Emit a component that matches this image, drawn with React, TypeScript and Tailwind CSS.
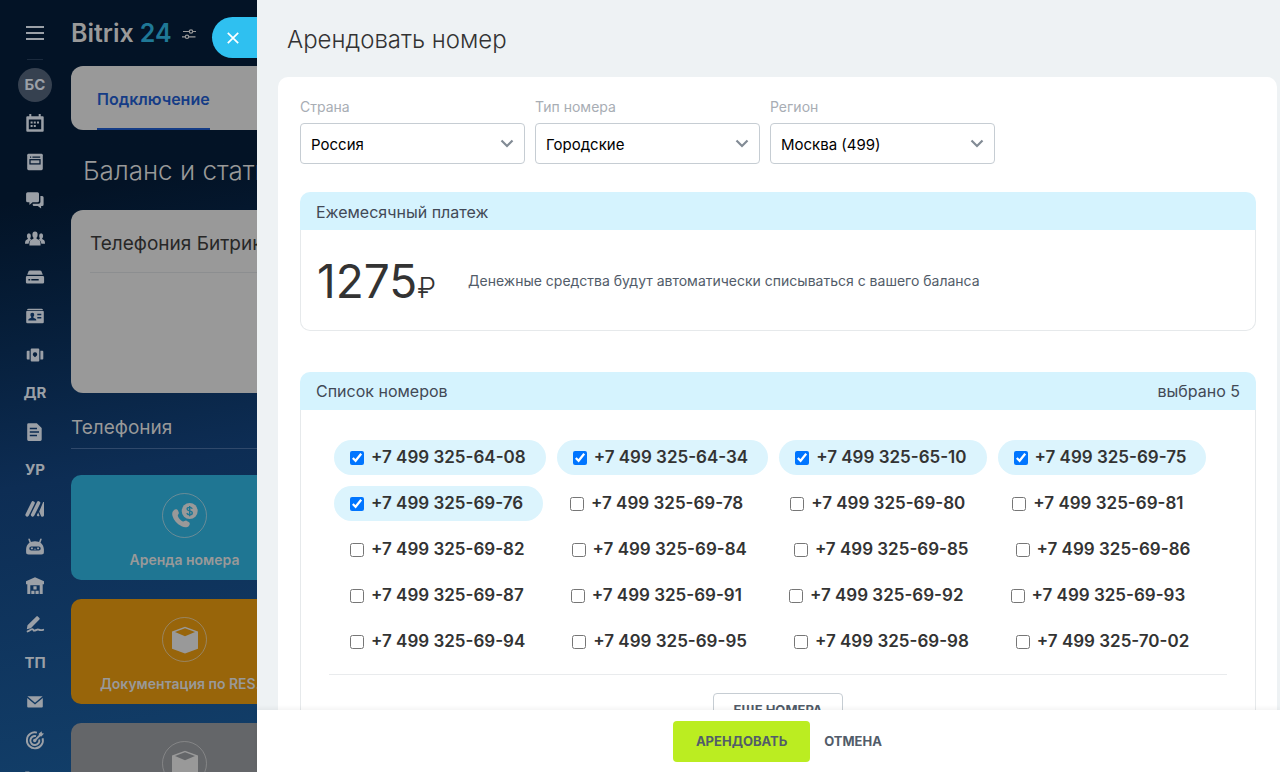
import React, { useState } from "react";

const PHONES = [
  "+7 499 325-64-08", "+7 499 325-64-34", "+7 499 325-65-10", "+7 499 325-69-75",
  "+7 499 325-69-76", "+7 499 325-69-78", "+7 499 325-69-80", "+7 499 325-69-81",
  "+7 499 325-69-82", "+7 499 325-69-84", "+7 499 325-69-85", "+7 499 325-69-86",
  "+7 499 325-69-87", "+7 499 325-69-91", "+7 499 325-69-92", "+7 499 325-69-93",
  "+7 499 325-69-94", "+7 499 325-69-95", "+7 499 325-69-98", "+7 499 325-70-02",
];

const Icon = ({ children }: { children: React.ReactNode }) => (
  <svg viewBox="0 0 20 20" className="size-5" fill="currentColor" aria-hidden="true">
    {children}
  </svg>
);

const dark = "#061a33";
const mid = "#0c2a50";

const MENU: { label: string; icon?: React.ReactNode }[] = [
  {
    label: "Календарь",
    icon: (
      <Icon>
        <path fillRule="evenodd" d="M2.3 3.2h2V1h2v2.2h7.4V1h2v2.2h2a1 1 0 0 1 1 1v13.500a1 1 0 0 1-1 1H2.300a1 1 0 0 1-1-1V4.200a1 1 0 0 1 1-1zM3.800 6.600v9.600h12.400V6.600z" />
        <path d="M8.800 8.500h2v2h-2zM12 8.500h2v2h-2zM5.600 11.900h2v2h-2zM8.800 11.900h2v2h-2zM5.600 8.500h2v2h-2z" />
      </Icon>
    ),
  },
  {
    label: "Лента",
    icon: (
      <Icon>
        <rect x="2.200" y="1.800" width="15.600" height="16.400" rx="1.400" />
        <path d="M5 5.200h1.200M7.400 5.200h7.800" stroke={dark} strokeWidth="1.300" />
        <rect x="5" y="7.700" width="10" height="4.200" fill="none" stroke={dark} strokeWidth="1.300" />
      </Icon>
    ),
  },
  {
    label: "Чат",
    icon: (
      <Icon>
        <path d="M2.700 2.200h9.600A1.600 1.600 0 0 1 14 3.800v6.900a1.600 1.600 0 0 1-1.700 1.600H7.600L4.400 15v-2.700H2.700a1.600 1.600 0 0 1-1.600-1.600V3.800a1.600 1.600 0 0 1 1.600-1.600z" />
        <path d="M15.400 6h1.700a1.500 1.500 0 0 1 1.500 1.500v6.900a1.500 1.500 0 0 1-1.500 1.500h-1v2.500L12.800 16H9a1.300 1.300 0 0 1-1.300-1.300v-.9H13.600a1.800 1.800 0 0 0 1.800-1.800z" />
      </Icon>
    ),
  },
  {
    label: "Сотрудники",
    icon: (
      <Icon>
        <ellipse cx="10" cy="5.700" rx="2.600" ry="3.200" />
        <ellipse cx="3.900" cy="6.900" rx="2" ry="2.600" />
        <ellipse cx="16.100" cy="6.900" rx="2" ry="2.600" />
        <path d="M8.600 8h2.800l.2 1.800 2.600 1.300c.9.500 1.400 2.200 1.400 5.300H4.400c0-3.100.5-4.800 1.400-5.300l2.600-1.300z" />
        <path d="M2.900 8.800h2.200l.3 1.200.9.500C4.800 11.400 4 12.400 3.600 14.800H0c0-2.200.4-3.400 1.200-3.900L2.800 10zM17.100 8.800h-2.200l-.3 1.200-.9.500c1.500.9 2.300 1.900 2.700 4.300H20c0-2.200-.4-3.400-1.200-3.900L17.200 10z" />
      </Icon>
    ),
  },
  {
    label: "Диск",
    icon: (
      <Icon>
        <path d="M5 3.400h10a1.600 1.600 0 0 1 1.300.7l1.500 3.700H2.200l1.500-3.700A1.600 1.600 0 0 1 5 3.400z" />
        <path fillRule="evenodd" d="M2.300 8.900h15.400a1.400 1.400 0 0 1 1.400 1.400v4.900a1.400 1.400 0 0 1-1.400 1.400H2.300a1.400 1.400 0 0 1-1.400-1.400v-4.900a1.400 1.400 0 0 1 1.400-1.400zM3.400 12v1.600h1.800V12zM6.300 12v1.600h7.400V12z" />
      </Icon>
    ),
  },
  {
    label: "Контакты",
    icon: (
      <Icon>
        <path d="M3.600 2.700h12.800a1.600 1.600 0 0 1 1.600 1.200H2a1.600 1.600 0 0 1 1.600-1.200z" />
        <rect x="1.200" y="4.800" width="17.600" height="12.400" rx="1.300" />
        <path fill={mid} d="M7.300 6.700a1.900 1.900 0 0 1 1.900 2.100c0 1-.4 1.700-.9 2l.2 1 2 .9c.6.300.8.900.8 1.900H3.300c0-1 .2-1.600.8-1.900l2-.9.2-1c-.5-.3-.9-1-.9-2a1.900 1.900 0 0 1 1.900-2.100zM12.300 7.700h4v1.600h-4zM12.300 11h4v1.600h-4z" />
      </Icon>
    ),
  },
  {
    label: "Группы",
    icon: (
      <Icon>
        <path fillRule="evenodd" d="M6.700 3.600h6.600a1 1 0 0 1 1 1v11a1 1 0 0 1-1 1H6.700a1 1 0 0 1-1-1v-11a1 1 0 0 1 1-1zM10 7.200a2.200 2.200 0 0 0-1.400 3.900L10 12.300l1.400-1.200A2.200 2.200 0 0 0 10 7.200z" />
        <path d="M2.600 5.800h2v8.600h-2a.9.900 0 0 1-.9-.9V6.700a.9.900 0 0 1 .9-.9zM15.400 5.800h2a.9.900 0 0 1 .9.900v6.800a.9.900 0 0 1-.9.900h-2z" />
      </Icon>
    ),
  },
  { label: "ДR" },
  {
    label: "Документы",
    icon: (
      <Icon>
        <path d="M3.600 1.200h8.200l4.900 4.900v11.500a1.400 1.400 0 0 1-1.400 1.400H3.600a1.400 1.400 0 0 1-1.400-1.400v-15a1.400 1.400 0 0 1 1.400-1.400z" />
        <path d="M4.800 6.600H12M4.800 10h9.200M4.800 13.600h7.200" stroke={mid} strokeWidth="1.500" />
      </Icon>
    ),
  },
  { label: "УР" },
  {
    label: "Маркет",
    icon: (
      <Icon>
        <path d="M2.200 15.800 8 4M7.700 15.800 13.500 4" stroke="currentColor" strokeWidth="3.600" strokeLinecap="round" />
        <path d="M19 3v13a1.600 1.600 0 0 1-3.200.4L14.200 12.600l4-9.600zM13.200 13.600l1.300 3.200a1.600 1.600 0 0 1-2.700-.5z" />
      </Icon>
    ),
  },
  {
    label: "Роботы",
    icon: (
      <Icon>
        <path d="m5.300 5.500-1.200-3.200M14.700 5.500l1.200-3.200" stroke="currentColor" strokeWidth="1.600" strokeLinecap="round" />
        <path fillRule="evenodd" d="M10 4.200c5 0 8.600 2.900 8.900 8v2.900c0 1.800-.8 2.500-2.500 2.500H3.600c-1.700 0-2.500-.7-2.500-2.500v-2.900c.3-5.100 3.900-8 8.900-8zM6.300 9.400a2 2 0 0 0 0 4h7.400a2 2 0 0 0 0-4z" />
        <path d="M5.900 10.600h2v1.600h-2zM12.100 10.600h2v1.600h-2zM8.800 11.800h2.400v.8H8.800z" />
      </Icon>
    ),
  },
  {
    label: "Склад",
    icon: (
      <Icon>
        <path fillRule="evenodd" d="m10 1.300 9 4v3h-1.300V18h-3V9.300H5.300V18h-3V8.300H1v-3z" />
        <path d="M8.400 10.200h3.200v3.200H8.400zM6.300 14.800h3.200V18H6.300zM10.500 14.800h3.200V18h-3.200z" />
      </Icon>
    ),
  },
  {
    label: "Подпись",
    icon: (
      <Icon>
        <path d="m2.500 11.300 8.900-8.900a1 1 0 0 1 1.400 0l1.600 1.600a1 1 0 0 1 0 1.400l-8.600 8.800-4 1z" />
        <path d="M2.600 17.400c2.700-1 4.200-3 5.300-2s.2 1.500 2 1.100 2.300-1.400 3.500-.9 2 1 4.800.2" fill="none" stroke="currentColor" strokeWidth="1.900" strokeLinecap="round" />
      </Icon>
    ),
  },
  { label: "ТП" },
  {
    label: "Почта",
    icon: (
      <Icon>
        <path d="M2.400 4.300h15.200L10 10.700z" />
        <path d="m2.200 6 7.800 6.600L17.800 6v8.600a1 1 0 0 1-1 1H3.200a1 1 0 0 1-1-1z" />
      </Icon>
    ),
  },
  {
    label: "Цели",
    icon: (
      <Icon>
        <g fill="none" stroke="currentColor" strokeWidth="1.900">
          <path d="M11.900 2.600a8 8 0 1 0 5.700 5.600" />
          <path d="M11 6.200a4.500 4.500 0 1 0 3.200 3.200" />
          <path d="m9.800 10.500 5.500-5.700" />
        </g>
        <circle cx="9.700" cy="10.500" r="1.700" />
        <path d="m13.700 3.800 2.900-2.600.4 2 2 .4-2.600 2.900-2.300-.4z" />
      </Icon>
    ),
  },
  {
    label: "CRM",
    icon: (
      <Icon>
        <path d="M.2 2.400h4.200v4H.2zM5.800 6h13v3h-13z" />
      </Icon>
    ),
  },
];

const Cube = ({ hole }: { hole: string }) => (
  <svg viewBox="0 0 28 28" className="size-7" fill="currentColor" aria-hidden="true">
    <path d="m14 .8 13 4.800v17.200l-13 4.800-13-4.800V5.600z" />
    <path d="m14 2.200 10 3.900-10 4.100L4 6.100z" fill={hole} />
  </svg>
);

const PhoneMoney = () => (
  <svg viewBox="0 0 28 28" className="size-7" fill="currentColor" aria-hidden="true">
    <path d="M2.600 8.400c1.500-1.700 3.600-1.500 4.400.2l.8 2c.5 1.400-1.300 2-1 3.200.6 2.400 2.600 4.600 5 5.600 1.400.6 2.200-1.300 3.700-.7l2.200 1.200c1.600 1 1.300 2.600.1 4-1.600 1.900-4.200 1.900-7.200.3C5.700 21.700 2.700 18.400 1.500 14c-.7-2.400-.2-4.400 1.100-5.600z" />
    <circle cx="18.700" cy="9" r="8" />
    <path d="M21.300 6.700c-.5-1-1.500-1.300-2.700-1.300-1.400 0-2.500.6-2.500 1.700 0 2.600 5.200 1 5.200 3.800 0 1.200-1.200 1.800-2.600 1.800s-2.400-.5-2.900-1.600M18.700 4v10.200" fill="none" stroke="#1f7693" strokeWidth="1.400" />
  </svg>
);

const Sidebar = () => (
  <nav className="w-[71px] shrink-0 pr-px flex flex-col items-center text-[#9ba0a7]">
    <button type="button" aria-label="Меню" className="mt-[23px] h-5 shrink-0 flex flex-col justify-center gap-1">
      <span className="h-[2px] w-[18px] bg-current" />
      <span className="h-[2px] w-[18px] bg-current" />
      <span className="h-[2px] w-[18px] bg-current" />
    </button>
    <div className="mt-4 h-px w-4 shrink-0 bg-[#1b2a3d]" />
    <div className="mt-2 size-[34px] shrink-0 rounded-full bg-[#364150] flex items-center justify-center text-[15px] font-bold">
      БС
    </div>
    <ul className="mt-[2px] h-[694px] shrink-0 grid auto-rows-fr">
      {MENU.map((item) => (
        <li key={item.label} className="flex items-center justify-center">
          <a href="#" aria-label={item.label} className="text-[15px] font-bold">
            {item.icon ?? item.label}
          </a>
        </li>
      ))}
    </ul>
  </nav>
);

interface TileProps {
  title: string;
  className: string;
  children: React.ReactNode;
}

const Tile = ({ title, className, children }: TileProps) => (
  <a href="#" className={`h-[105px] w-[227px] shrink-0 rounded-[10px] flex flex-col items-center pt-[18px] ${className}`}>
    <span className="size-[45px] shrink-0 rounded-full border border-current/60 flex items-center justify-center">{children}</span>
    <span className="mt-3 text-sm leading-5 font-semibold whitespace-nowrap">{title}</span>
  </a>
);

const Background = () => (
  <div className="w-[186px] shrink-0 flex flex-col whitespace-nowrap text-[#999999]">
    <header className="flex items-center h-[66px] shrink-0 pt-[2px] text-[25px] font-semibold">
      Bitrix <span className="ml-[6px] text-[#1f7896]">24</span>
      <svg viewBox="0 0 14 12" className="ml-[10px] w-[14px] h-3" fill="none" stroke="currentColor" strokeWidth="1.2" aria-hidden="true">
        <path d="M1 3.500h6M11 3.500h3M0 8.800h3M7 8.800h6.500" />
        <circle cx="9" cy="3.500" r="1.700" />
        <circle cx="5" cy="8.800" r="1.700" />
      </svg>
    </header>
    <div className="h-16 shrink-0 w-[400px] rounded-xl bg-[#999999] pl-[26px] flex">
      <a href="#" className="flex items-center border-b-2 border-[#153c86] pt-1 text-base font-semibold text-[#153c86]">
        Подключение
      </a>
    </div>
    <h1 className="h-20 pl-3 flex items-center shrink-0 text-[26px] font-light">Баланс и статистика</h1>
    <section className="h-[183px] w-[400px] shrink-0 rounded-xl bg-[#999999] px-[19px]">
      <h2 className="h-[63px] border-b border-[#8c8e90] pt-[6px] flex items-center text-[19px] text-[#272727]">
        Телефония Битрикс24
      </h2>
    </section>
    <h2 className="mt-[5px] mb-[26px] h-[51px] shrink-0 border-b border-[#30496b] pt-[10px] flex items-center text-[19px]">
      Телефония
    </h2>
    <div className="flex flex-col gap-[19px]">
      <Tile title="Аренда номера" className="bg-[#1f7693]">
        <PhoneMoney />
      </Tile>
      <Tile title="Документация по RES..." className="bg-[#98650a]">
        <Cube hole="#98650a" />
      </Tile>
      <Tile title="Документация" className="bg-[#646669]">
        <Cube hole="#646669" />
      </Tile>
    </div>
  </div>
);

interface SelectFieldProps {
  id: string;
  label: string;
  value: string;
}

const SelectField = ({ id, label, value }: SelectFieldProps) => (
  <div className="w-[225px]">
    <label htmlFor={id} className="block text-sm text-[#a8adb4]">
      {label}
    </label>
    <div className="relative mt-[6px]">
      <select
        id={id}
        className="h-[41px] w-full appearance-none rounded border border-[#c6cdd3] bg-white pt-1 pl-[10px] pr-9 text-[15px] text-black"
      >
        <option>{value}</option>
      </select>
      <svg
        viewBox="0 0 14 10"
        className="pointer-events-none absolute right-[11px] top-4 w-[14px] h-[10px]"
        fill="none"
        stroke="#828b95"
        strokeWidth="2.2"
        aria-hidden="true"
      >
        <path d="m1.500 1.500 5.500 5.500 5.500-5.500" />
      </svg>
    </div>
  </div>
);

const PhoneList = ({ selected, onToggle }: { selected: string[]; onToggle: (phone: string) => void }) => (
  <div className="flex flex-wrap gap-[11px] px-[5px] pb-[15px]">
    {PHONES.map((phone) => {
      const checked = selected.includes(phone);
      return (
        <label
          key={phone}
          className={`h-[35px] rounded-full pl-4 pr-5 flex items-center gap-[7px] text-[17px] font-semibold text-[#333333] ${
            checked ? "bg-[#dcf4fd]" : ""
          }`}
        >
          <input type="checkbox" checked={checked} onChange={() => onToggle(phone)} className="size-[14px]" />
          <span className="pt-px">{phone}</span>
        </label>
      );
    })}
  </div>
);

export default function App() {
  const [selected, setSelected] = useState(PHONES.slice(0, 5));

  const toggle = (phone: string) =>
    setSelected((prev) => (prev.includes(phone) ? prev.filter((p) => p !== phone) : [...prev, phone]));

  return (
    <div className="flex h-screen overflow-hidden font-['Inter',sans-serif]">
      <div className="flex w-[257px] shrink-0 overflow-hidden bg-linear-170 from-[#031326] from-25% via-[#0d2d54] via-60% to-[#123f6a]">
        <Sidebar />
        <Background />
      </div>

      <div className="relative flex min-w-0 flex-1 flex-col bg-[#eef2f4]">
        <button
          type="button"
          aria-label="Закрыть"
          className="absolute right-full top-[17px] h-[41px] w-[45px] rounded-l-full bg-[#2fc0f0] pr-[3px] flex items-center justify-center text-white"
        >
          <svg viewBox="0 0 12 12" className="size-3" fill="none" stroke="currentColor" strokeWidth="1.7" aria-hidden="true">
            <path d="m.8.8 10.400 10.400M11.200.8.8 11.200" />
          </svg>
        </button>

        <main className="flex min-h-0 flex-1 flex-col overflow-hidden">
          <h1 className="h-[77px] shrink-0 pl-[30px] pt-[2px] flex items-center text-2xl font-light text-[#333333]">Арендовать номер</h1>

          <div className="ml-[21px] mr-[3px] shrink-0 rounded-[10px] bg-white pl-[22px] pr-[21px] pt-5 pb-10">
            <form className="flex gap-[10px]">
              <SelectField id="country" label="Страна" value="Россия" />
              <SelectField id="type" label="Тип номера" value="Городские" />
              <SelectField id="region" label="Регион" value="Москва (499)" />
            </form>

            <section className="mt-7">
              <h2 className="h-[38px] rounded-t-[10px] bg-[#d5f3fe] px-4 pt-[2px] flex items-center text-base text-[#424956]">
                Ежемесячный платеж
              </h2>
              <div className="flex h-[101px] items-center gap-8 rounded-b-[10px] border border-t-0 border-[#e6e9eb] pt-[2px] pl-4">
                <p className="text-[46px] text-[#333333]">
                  1275<span className="text-[28px] font-light">₽</span>
                </p>
                <p className="text-sm text-[#525c69]">Денежные средства будут автоматически списываться с вашего баланса</p>
              </div>
            </section>

            <section className="mt-[41px]">
              <h2 className="h-[38px] rounded-t-[10px] bg-[#d5f3fe] px-4 flex items-center justify-between text-base text-[#424956]">
                Список номеров <span>выбрано {selected.length}</span>
              </h2>
              <div className="rounded-b-[10px] border border-t-0 border-[#e6e9eb] px-7 pt-[30px] pb-6">
                <PhoneList selected={selected} onToggle={toggle} />
                <div className="border-t border-[#e9ebed] pt-[18px] flex justify-center">
                  <button type="button" className="h-[35px] w-[130px] rounded border border-[#c6cdd3] text-[13px] font-bold text-[#525c69]">
                    ЕЩЕ НОМЕРА
                  </button>
                </div>
              </div>
            </section>
          </div>
        </main>

        <footer className="h-[62px] shrink-0 bg-white shadow-[0_-2px_4px_rgba(0,0,0,0.05)] flex items-center justify-center gap-[14px] pt-px pl-[18px] text-[13px] font-bold text-[#525c69]">
          <button type="button" className="h-[41px] w-[137px] rounded bg-[#bbed21]">
            АРЕНДОВАТЬ
          </button>
          <button type="button">ОТМЕНА</button>
        </footer>
      </div>
    </div>
  );
}
